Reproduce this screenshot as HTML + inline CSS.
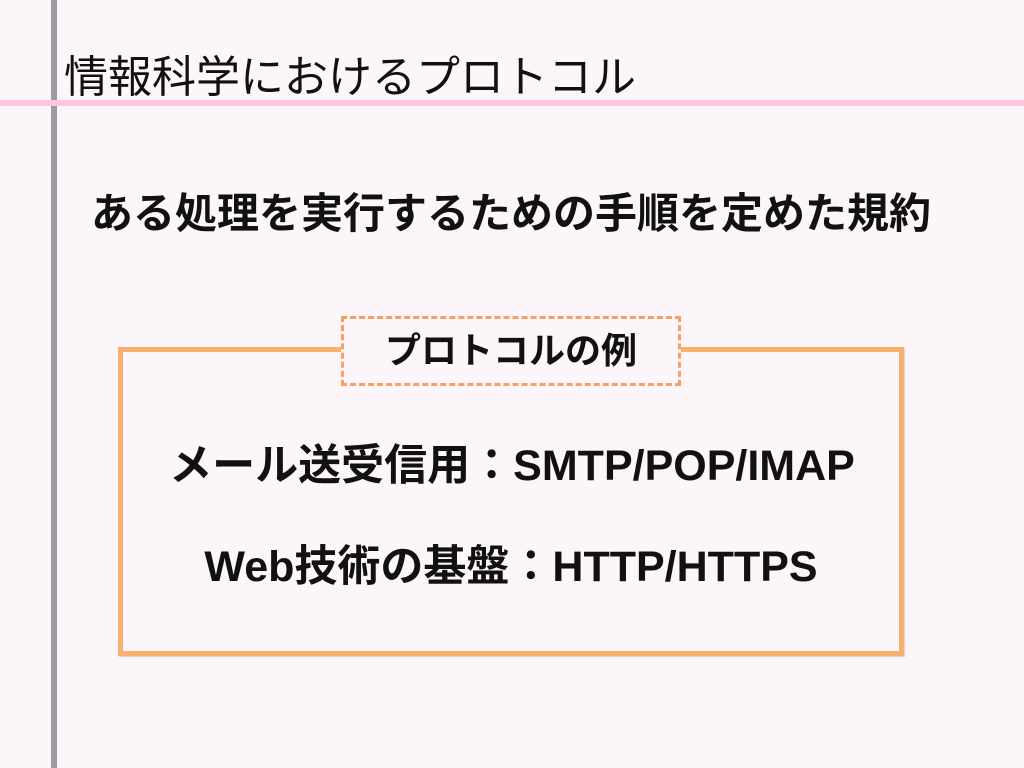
<!DOCTYPE html>
<html><head><meta charset="utf-8"><style>
html,body{margin:0;padding:0}
body{width:1024px;height:768px;background:#fcf5fa;position:relative;overflow:hidden;font-family:"Liberation Sans","Noto Sans CJK JP",sans-serif;color:#111}
.v{position:absolute;left:51px;top:0;width:6px;height:768px;background:#a09aa0}
.h{position:absolute;left:0;top:100px;width:1024px;height:6px;background:#fdc6e2}
.t{position:absolute;left:64px;top:50px;font-size:44px;line-height:56px;white-space:nowrap;font-weight:normal}
.m{position:absolute;left:0;width:1024px;text-align:center;font-weight:bold;white-space:nowrap}
.box{position:absolute;left:118px;top:347px;width:776px;height:299px;border:5px solid #f8b070;box-shadow:1px 1px 1px rgba(0,0,0,.15)}
.lab{position:absolute;left:341px;top:316px;width:334px;height:64px;border:3px dashed #f9a060;background:#fcf5fa;font-size:36px;font-weight:bold;text-align:center;line-height:64px}
</style></head><body>
<div class="v"></div><div class="h"></div>
<div class="t">情報科学におけるプロトコル</div>
<div class="m" style="top:187px;left:-1px;font-size:42px;line-height:54px;font-weight:bold">ある処理を実行するための手順を定めた規約</div>
<div class="box"></div>
<div class="lab">プロトコルの例</div>
<div class="m" style="top:439px;left:0px;font-size:43px;line-height:54px">メール送受信用：SMTP/POP/IMAP</div>
<div class="m" style="top:540px;left:-1px;font-size:43px;line-height:54px">Web技術の基盤：HTTP/HTTPS</div>
</body></html>
